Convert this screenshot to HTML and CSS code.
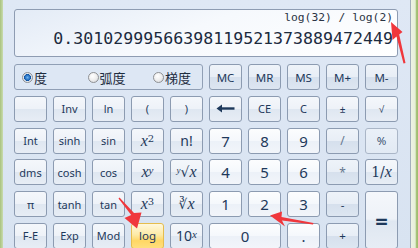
FILE: index.html
```html
<!DOCTYPE html>
<html lang="zh">
<head>
    <meta charset="UTF-8">
    <title>计算器</title>
    <link rel="stylesheet" href="styles.css">
</head>
<body>
    <div class="window">
        <div class="edge-left"></div>
        <div class="calc">
            <div class="display">
                <div class="expr">log(32) / log(2)</div>
                <div class="value">0.30102999566398119521373889472449</div>
            </div>

            <div class="keys">
                <div class="angles">
                    <label class="radio"><span class="dot on"></span>度</label>
                    <label class="radio"><span class="dot"></span>弧度</label>
                    <label class="radio"><span class="dot"></span>梯度</label>
                </div>
                <button class="key mem">MC</button>
                <button class="key mem">MR</button>
                <button class="key mem">MS</button>
                <button class="key mem">M+</button>
                <button class="key mem">M-</button>

                <button class="key"></button>
                <button class="key">Inv</button>
                <button class="key">ln</button>
                <button class="key">(</button>
                <button class="key">)</button>
                <button class="key">
                    <svg width="19" height="9" viewBox="0 0 19 9"><path d="M5 4.5H18.5" stroke="#1e395b" stroke-width="2.4"/><path d="M0.5 4.5L6 0.5V8.5Z" fill="#1e395b"/></svg>
                </button>
                <button class="key">CE</button>
                <button class="key">C</button>
                <button class="key small">±</button>
                <button class="key small">√</button>

                <button class="key">Int</button>
                <button class="key">sinh</button>
                <button class="key">sin</button>
                <button class="key math"><i>x</i><sup>2</sup></button>
                <button class="key big">n!</button>
                <button class="key num">7</button>
                <button class="key num">8</button>
                <button class="key num">9</button>
                <button class="key mem faint">/</button>
                <button class="key dim">%</button>

                <button class="key">dms</button>
                <button class="key">cosh</button>
                <button class="key">cos</button>
                <button class="key math"><i>x</i><sup><i>y</i></sup></button>
                <button class="key math root"><span class="idx"><i>y</i></span>√<i>x</i></button>
                <button class="key num">4</button>
                <button class="key num">5</button>
                <button class="key num">6</button>
                <button class="key mem faint">*</button>
                <button class="key math">1/<i>x</i></button>

                <button class="key">π</button>
                <button class="key">tanh</button>
                <button class="key">tan</button>
                <button class="key math"><i>x</i><sup>3</sup></button>
                <button class="key math">∛<i>x</i></button>
                <button class="key num">1</button>
                <button class="key num">2</button>
                <button class="key num">3</button>
                <button class="key mem">-</button>
                <button class="key equals">=</button>

                <button class="key">F-E</button>
                <button class="key">Exp</button>
                <button class="key">Mod</button>
                <button class="key hot">log</button>
                <button class="key big">10<sup><i>x</i></sup></button>
                <button class="key num zero">0</button>
                <button class="key num">.</button>
                <button class="key mem">+</button>
            </div>
        </div>
        <div class="edge-right"></div>
    </div>

    <!-- red annotation arrows drawn over the screenshot -->
    <svg class="marks" width="418" height="248" viewBox="0 0 418 248">
        <path d="M391 22 L402.5 32 L399.2 34.5 L405.5 63 L403.5 63.5 L396.5 36.5 L392.5 40 Z" fill="#f0373c"/>
        <path d="M119.5 197.5 L134 213 L141.5 212.5 L137 228.5 L124.5 218 L131.2 215 L118.5 198.5 Z" fill="#f0373c"/>
        <path d="M270 215.5 L282 211.5 L281.5 217 L313.5 223 L313 224.5 L282 220.5 L285 226.5 Z" fill="#f0373c"/>
    </svg>
</body>
</html>
```

FILE: styles.css
```css
body {
    margin: 0;
    width: 418px;
    height: 248px;
    overflow: hidden;
    font-family: "Noto Sans", "Noto Sans CJK SC", sans-serif;
    background-color: #dae5f2;
}

.window {
    display: flex;
    height: 248px;
}

.edge-left {
    width: 3px;
    background: linear-gradient(to right, #a9c27f, #c9dcae);
}

.edge-right {
    width: 7px;
    background: linear-gradient(to right, #eef3e4 0%, #e6eed8 60%, #a9c47c 75%, #9dbb6c 100%);
}

.calc {
    flex: 1;
    padding: 9px 0 0 11px;
    border-right: 1px solid #a3aebd;
    background: linear-gradient(#dfe8f5, #d8e3f1);
}

.display {
    width: 384px;
    height: 48px;
    box-sizing: border-box;
    padding: 1px 4px 0 4px;
    border: 1px solid #8e9cb2;
    border-radius: 3px;
    background: linear-gradient(160deg, #e3ebf6 0%, #f6f9fd 45%, #ffffff 100%);
    color: #1c2b3e;
    text-align: right;
}

.expr {
    font-family: "DejaVu Sans Mono", monospace;
    font-size: 11.3px;
    line-height: 14px;
    color: #2a3444;
}

.value {
    margin-top: 4px;
    font-family: "DejaVu Sans Mono", monospace;
    font-size: 16.6px;
    line-height: 20px;
    white-space: nowrap;
}

.keys {
    display: grid;
    grid-template-columns: repeat(10, 33px);
    grid-auto-rows: 26px;
    gap: 5.8px 6px;
    margin-top: 7px;
}

.angles {
    grid-column: 1 / 6;
    display: flex;
    align-items: center;
    padding-left: 7px;
    border: 1px solid #909fb5;
    border-radius: 3px;
    background-color: #dde7f4;
    font-size: 13px;
    color: #1e2d40;
}

.radio {
    display: flex;
    align-items: center;
    flex: none;
    width: 65.5px;
}

.radio:last-child {
    width: auto;
}

.dot {
    width: 9px;
    height: 9px;
    margin-right: 1px;
    border: 1px solid #8f9194;
    border-radius: 50%;
    background: radial-gradient(circle at 40% 35%, #ffffff 0%, #eeeeee 50%, #cfd3d8 100%);
}

.dot.on {
    background: radial-gradient(circle, #6fb3ee 0%, #1f6cc0 40%, #0e4f9a 52%, #e6ecf3 58%, #d0d6de 100%);
}

.key {
    display: flex;
    align-items: center;
    justify-content: center;
    padding: 0;
    border: 1px solid #8c9bb1;
    border-radius: 3px;
    background: linear-gradient(#f4f7fb 0%, #eef2f8 48%, #dfe7f1 52%, #e7edf5 100%);
    font-family: "Noto Sans", sans-serif;
    font-size: 11px;
    color: #1e395b;
    white-space: nowrap;
}

.key.num {
    background: linear-gradient(#fcfdfe 0%, #f5f8fc 48%, #ecf1f8 52%, #f2f5fa 100%);
    font-size: 15px;
}

.key.mem {
    background: linear-gradient(#eef3f9 0%, #e8eef6 48%, #d6e0ed 52%, #dde6f1 100%);
    font-size: 11.5px;
}

.key.faint {
    color: #64768e;
    font-size: 12px;
}

.key.dim {
    border-color: #aab6c7;
    background: linear-gradient(#eaf0f8, #e2eaf4);
    color: #3d5473;
    font-size: 11.5px;
}

.key.small {
    font-size: 10px;
}

.key.big {
    font-size: 14px;
}

.key.math {
    font-family: "DejaVu Serif", "Liberation Serif", serif;
    font-size: 14px;
}

.key i {
    font-family: "Liberation Serif", serif;
    font-style: italic;
    font-size: 16px;
}

.key sup {
    font-size: 10px;
    line-height: 0;
    position: relative;
    top: -2px;
}

.key sup i {
    font-size: 11px;
}

.key.root .idx {
    align-self: flex-start;
    margin-top: 4px;
    line-height: 9px;
}

.key.root .idx i {
    font-size: 9px;
}

.key.hot {
    border-color: #e5bd4e;
    background: linear-gradient(#fff8dc 0%, #fdeaa6 45%, #ffd764 70%, #ffdf7e 100%);
    font-size: 11.5px;
}

.key.equals {
    grid-row: span 2;
    font-size: 22px;
    font-weight: bold;
}

.key.zero {
    grid-column: span 2;
}

.marks {
    position: absolute;
    left: 0;
    top: 0;
    pointer-events: none;
}
```
